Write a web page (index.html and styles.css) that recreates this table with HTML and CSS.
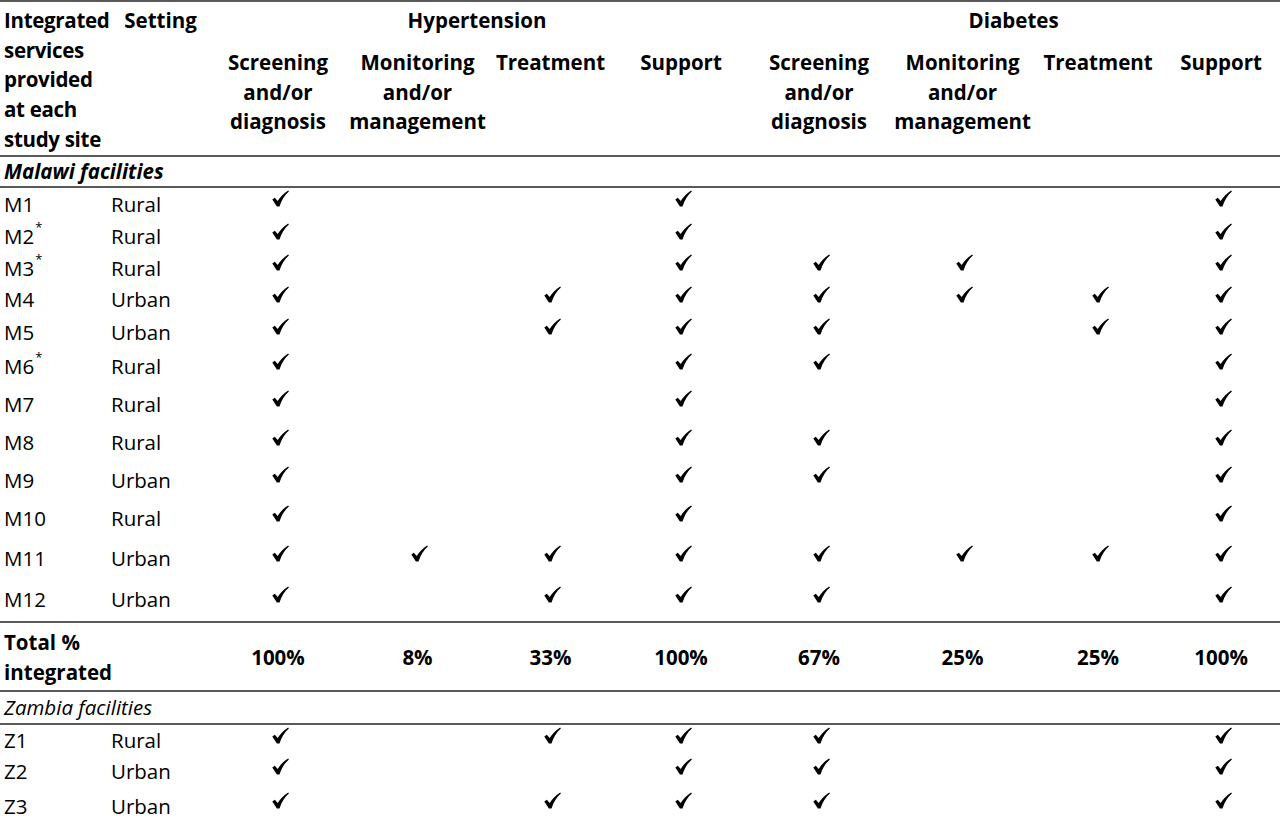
FILE: index.html
```html
<!DOCTYPE html>
<html lang="en">
<head>
  <meta charset="UTF-8">
  <title>Integrated services provided at each study site</title>
  <link rel="stylesheet" href="styles.css">
</head>
<body>
  <svg width="0" height="0" class="defs">
    <symbol id="chk" viewBox="0 0 17 17">
      <path d="M0.3 9.4 L2.8 7.8 L5.7 11.0 C8.4 6.6 11.7 3.0 16.2 0.4 L16.9 1.4 C12.9 4.8 9.7 9.7 7.5 16.5 L4.9 16.5 Z"/>
    </symbol>
  </svg>

  <table class="sites">
    <colgroup>
      <col class="c-site"><col class="c-setting">
      <col class="c-hs"><col class="c-hm"><col class="c-ht"><col class="c-hsup">
      <col class="c-ds"><col class="c-dm"><col class="c-dt"><col class="c-dsup">
    </colgroup>
    <thead>
      <tr class="h1">
        <th rowspan="2" class="site">Integrated services provided at each study site</th>
        <th rowspan="2" class="setting">Setting</th>
        <th colspan="4">Hypertension</th>
        <th colspan="4" class="last">Diabetes</th>
      </tr>
      <tr class="h2">
        <th>Screening and/or diagnosis</th>
        <th>Monitoring and/or management</th>
        <th>Treatment</th>
        <th>Support</th>
        <th>Screening and/or diagnosis</th>
        <th>Monitoring and/or management</th>
        <th>Treatment</th>
        <th class="last">Support</th>
      </tr>
    </thead>
    <tbody>
      <tr class="group"><td colspan="10" class="site"><b><i>Malawi facilities</i></b></td></tr>

      <tr style="height:33px"><td class="site">M1</td><td>Rural</td>
        <td><svg class="ck"><use href="#chk"/></svg></td><td></td><td></td><td><svg class="ck"><use href="#chk"/></svg></td>
        <td></td><td></td><td></td><td class="last"><svg class="ck"><use href="#chk"/></svg></td></tr>
      <tr style="height:32px"><td class="site">M2<sup>*</sup></td><td>Rural</td>
        <td><svg class="ck"><use href="#chk"/></svg></td><td></td><td></td><td><svg class="ck"><use href="#chk"/></svg></td>
        <td></td><td></td><td></td><td class="last"><svg class="ck"><use href="#chk"/></svg></td></tr>
      <tr style="height:31px"><td class="site">M3<sup>*</sup></td><td>Rural</td>
        <td><svg class="ck"><use href="#chk"/></svg></td><td></td><td></td><td><svg class="ck"><use href="#chk"/></svg></td>
        <td><svg class="ck"><use href="#chk"/></svg></td><td><svg class="ck"><use href="#chk"/></svg></td><td></td><td class="last"><svg class="ck"><use href="#chk"/></svg></td></tr>
      <tr style="height:32px"><td class="site">M4</td><td>Urban</td>
        <td><svg class="ck"><use href="#chk"/></svg></td><td></td><td><svg class="ck"><use href="#chk"/></svg></td><td><svg class="ck"><use href="#chk"/></svg></td>
        <td><svg class="ck"><use href="#chk"/></svg></td><td><svg class="ck"><use href="#chk"/></svg></td><td><svg class="ck"><use href="#chk"/></svg></td><td class="last"><svg class="ck"><use href="#chk"/></svg></td></tr>
      <tr style="height:33px"><td class="site">M5</td><td>Urban</td>
        <td><svg class="ck"><use href="#chk"/></svg></td><td></td><td><svg class="ck"><use href="#chk"/></svg></td><td><svg class="ck"><use href="#chk"/></svg></td>
        <td><svg class="ck"><use href="#chk"/></svg></td><td></td><td><svg class="ck"><use href="#chk"/></svg></td><td class="last"><svg class="ck"><use href="#chk"/></svg></td></tr>
      <tr style="height:36px"><td class="site">M6<sup>*</sup></td><td>Rural</td>
        <td><svg class="ck"><use href="#chk"/></svg></td><td></td><td></td><td><svg class="ck"><use href="#chk"/></svg></td>
        <td><svg class="ck"><use href="#chk"/></svg></td><td></td><td></td><td class="last"><svg class="ck"><use href="#chk"/></svg></td></tr>
      <tr style="height:39px"><td class="site">M7</td><td>Rural</td>
        <td><svg class="ck"><use href="#chk"/></svg></td><td></td><td></td><td><svg class="ck"><use href="#chk"/></svg></td>
        <td></td><td></td><td></td><td class="last"><svg class="ck"><use href="#chk"/></svg></td></tr>
      <tr style="height:38px"><td class="site">M8</td><td>Rural</td>
        <td><svg class="ck"><use href="#chk"/></svg></td><td></td><td></td><td><svg class="ck"><use href="#chk"/></svg></td>
        <td><svg class="ck"><use href="#chk"/></svg></td><td></td><td></td><td class="last"><svg class="ck"><use href="#chk"/></svg></td></tr>
      <tr style="height:37px"><td class="site">M9</td><td>Urban</td>
        <td><svg class="ck"><use href="#chk"/></svg></td><td></td><td></td><td><svg class="ck"><use href="#chk"/></svg></td>
        <td><svg class="ck"><use href="#chk"/></svg></td><td></td><td></td><td class="last"><svg class="ck"><use href="#chk"/></svg></td></tr>
      <tr style="height:40px"><td class="site">M10</td><td>Rural</td>
        <td><svg class="ck"><use href="#chk"/></svg></td><td></td><td></td><td><svg class="ck"><use href="#chk"/></svg></td>
        <td></td><td></td><td></td><td class="last"><svg class="ck"><use href="#chk"/></svg></td></tr>
      <tr style="height:40px"><td class="site">M11</td><td>Urban</td>
        <td><svg class="ck"><use href="#chk"/></svg></td><td><svg class="ck"><use href="#chk"/></svg></td><td><svg class="ck"><use href="#chk"/></svg></td><td><svg class="ck"><use href="#chk"/></svg></td>
        <td><svg class="ck"><use href="#chk"/></svg></td><td><svg class="ck"><use href="#chk"/></svg></td><td><svg class="ck"><use href="#chk"/></svg></td><td class="last"><svg class="ck"><use href="#chk"/></svg></td></tr>
      <tr class="end" style="height:44px"><td class="site">M12</td><td>Urban</td>
        <td><svg class="ck"><use href="#chk"/></svg></td><td></td><td><svg class="ck"><use href="#chk"/></svg></td><td><svg class="ck"><use href="#chk"/></svg></td>
        <td><svg class="ck"><use href="#chk"/></svg></td><td></td><td></td><td class="last"><svg class="ck"><use href="#chk"/></svg></td></tr>

      <tr class="total">
        <td colspan="2" class="site">Total %<br>integrated</td>
        <td>100%</td><td>8%</td><td>33%</td><td>100%</td>
        <td>67%</td><td>25%</td><td>25%</td><td class="last">100%</td>
      </tr>

      <tr class="group zambia"><td colspan="10" class="site"><i>Zambia facilities</i></td></tr>

      <tr style="height:32px"><td class="site">Z1</td><td>Rural</td>
        <td><svg class="ck"><use href="#chk"/></svg></td><td></td><td><svg class="ck"><use href="#chk"/></svg></td><td><svg class="ck"><use href="#chk"/></svg></td>
        <td><svg class="ck"><use href="#chk"/></svg></td><td></td><td></td><td class="last"><svg class="ck"><use href="#chk"/></svg></td></tr>
      <tr style="height:29px"><td class="site">Z2</td><td>Urban</td>
        <td><svg class="ck"><use href="#chk"/></svg></td><td></td><td></td><td><svg class="ck"><use href="#chk"/></svg></td>
        <td><svg class="ck"><use href="#chk"/></svg></td><td></td><td></td><td class="last"><svg class="ck"><use href="#chk"/></svg></td></tr>
      <tr style="height:40px"><td class="site">Z3</td><td>Urban</td>
        <td><svg class="ck"><use href="#chk"/></svg></td><td></td><td><svg class="ck"><use href="#chk"/></svg></td><td><svg class="ck"><use href="#chk"/></svg></td>
        <td><svg class="ck"><use href="#chk"/></svg></td><td></td><td></td><td class="last"><svg class="ck"><use href="#chk"/></svg></td></tr>
    </tbody>
  </table>
</body>
</html>
```

FILE: styles.css
```css
body {
  margin: 0;
  background: #ffffff;
  color: #000000;
  font-family: "Open Sans", Lato, "Liberation Sans", sans-serif;
  font-size: 20.5px;
  line-height: 29.7px;
}
.defs { position: absolute; }

.sites {
  width: 1280px;
  table-layout: fixed;
  border-collapse: separate;
  border-spacing: 0;
  border-top: 2px solid #595959;
}
.c-site { width: 108px; }
.c-setting { width: 99px; }
.c-hs { width: 142px; }
.c-hm { width: 137px; }
.c-ht { width: 129px; }
.c-hsup { width: 132px; }
.c-ds { width: 144px; }
.c-dm { width: 143px; }
.c-dt { width: 128px; }
.c-dsup { width: 118px; }

th, td {
  padding: 0;
  text-align: center;
  vertical-align: middle;
  font-weight: inherit;
}
th {
  font-weight: bold;
  vertical-align: top;
}
.site {
  text-align: left;
  padding-left: 4px;
}
th.site { letter-spacing: -0.3px; }
.setting { padding-left: 6px; }
td:nth-child(2) { text-align: left; padding-left: 3px; }
.total td:nth-child(2) { text-align: center; padding-left: 0; }

.h1 { height: 43px; }
.h1 th { padding-top: 4px; }
.h2 th { padding-top: 3px; border-bottom: 2px solid #595959; }
.h1 th[rowspan] { border-bottom: 2px solid #595959; }

.group { height: 31px; }
.group td { border-bottom: 2px solid #595959; }
.end td { border-bottom: 2px solid #595959; }

.total { height: 69px; font-weight: bold; }
.total td { border-bottom: 2px solid #595959; padding-top: 2px; }
.zambia { height: 33px; }

sup {
  font-size: 13px;
  line-height: 0;
  vertical-align: 12px;
  margin-left: 1px;
}

.ck {
  display: block;
  width: 17px;
  height: 17px;
  margin: 0 auto 12px;
  position: relative;
  left: 2px;
  fill: #000000;
}
```
